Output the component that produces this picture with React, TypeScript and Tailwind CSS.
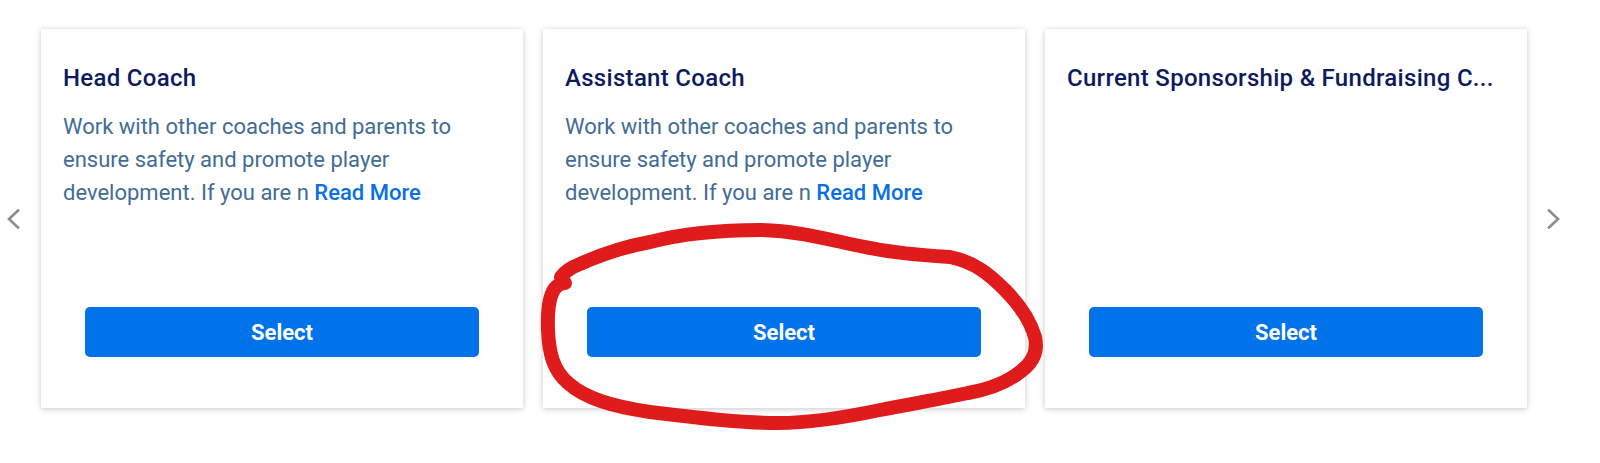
import React from 'react';

interface Role {
  id: string;
  title: string;
  description?: string;
}

const roles: Role[] = [
  {
    id: 'head-coach',
    title: 'Head Coach',
    description: 'Work with other coaches and parents to ensure safety and promote player development. If you are n',
  },
  {
    id: 'assistant-coach',
    title: 'Assistant Coach',
    description: 'Work with other coaches and parents to ensure safety and promote player development. If you are n',
  },
  {
    id: 'sponsorship',
    title: 'Current Sponsorship & Fundraising C...',
  },
];

function Chevron({ dir }: { dir: 'left' | 'right' }) {
  return (
    <svg width="14" height="20" viewBox="0 0 14 20" fill="none">
      <path
        d={dir === 'left' ? 'M12 1.5 L3 10 L12 18.5' : 'M2 1.5 L11 10 L2 18.5'}
        stroke="#8c8c8c"
        strokeWidth="2.6"
        strokeLinecap="square"
      />
    </svg>
  );
}

function RoleCard({ role }: { role: Role }) {
  return (
    <div className="flex h-[379px] w-[482px] shrink-0 flex-col bg-white px-[22px] pt-[33px] pb-[51px] shadow-[0_1px_6px_rgba(0,0,0,0.22)]">
      <h3 className="truncate text-[24px] leading-[32px] font-medium tracking-[0.3px] text-[#0d1b5e]">{role.title}</h3>
      {role.description && (
        <p className="mt-[16px] text-[22px] leading-[33px] text-[#416c96]">
          {role.description}{' '}
          <a href="#" className="font-medium text-[#0a6fe3]">
            Read More
          </a>
        </p>
      )}
      <div className="mt-auto px-[22px]">
        <button className="h-[50px] w-full rounded-[5px] bg-[#0072ea] text-[22px] font-bold text-white">Select</button>
      </div>
    </div>
  );
}

export default function App() {
  return (
    <div className="relative h-[463px] w-[1600px] bg-white font-['Roboto',sans-serif]">
      <div className="flex items-start pt-[29px]">
        {/* Prev */}
        <div className="flex h-[379px] w-[41px] shrink-0 items-center pl-[6px]">
          <Chevron dir="left" />
        </div>

        {/* Cards */}
        <div className="flex gap-[20px]">
          {roles.map((role) => (
            <RoleCard key={role.id} role={role} />
          ))}
        </div>

        {/* Next */}
        <div className="flex h-[379px] items-center pl-[20px]">
          <Chevron dir="right" />
        </div>
      </div>

      {/* hand drawn annotation */}
      <svg className="pointer-events-none absolute inset-0" width="1600" height="463" viewBox="0 0 1600 463" fill="none">
        <path
          d="M561 277 C566 270 572 267 580 264 C600 255 623 247 650 242 C685 233 720 230 761 230 C800 231 830 240 860 246 C892 253 920 255 950 257 C975 262 990 275 1005 290 C1020 305 1030 320 1035 337 C1038 350 1034 362 1020 372 C1005 384 985 390 968 393 C945 398 916 403 880 410 C847 417 810 423 778 423 C740 423 700 418 650 412 C610 406 585 398 568 383 C553 370 549 353 548 330 C547 305 551 292 556 287 C559 284 562 283 565 283"
          stroke="#e01b1b"
          strokeWidth="14"
          strokeLinecap="round"
          strokeLinejoin="round"
        />
      </svg>
    </div>
  );
}
